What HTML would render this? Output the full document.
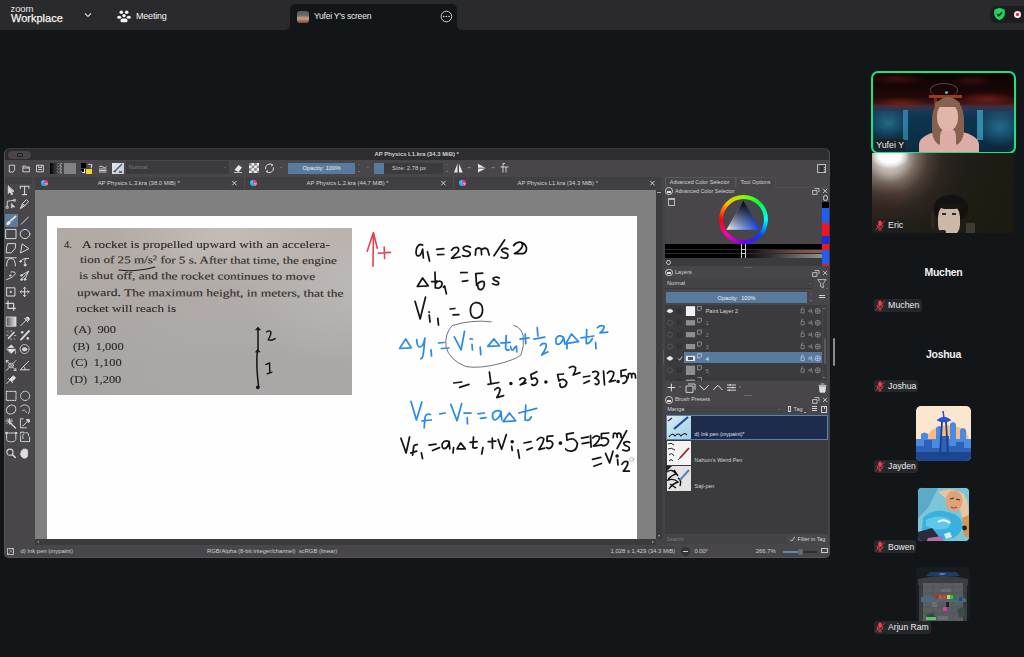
<!DOCTYPE html>
<html><head><meta charset="utf-8">
<style>
*{margin:0;padding:0;box-sizing:border-box}
html,body{width:1024px;height:657px;overflow:hidden;background:#131619;font-family:"Liberation Sans",sans-serif;position:relative}
.a{position:absolute}
#top{left:0;top:0;width:1024px;height:30px;background:#2a2a2c}
.zt{color:#f2f2f2;white-space:nowrap}
#kr{left:0;top:0;width:1024px;height:657px;clip-path:inset(148px 194px 99px 4px round 6px 6px 5px 5px);background:#48464a}
.k{position:absolute}
.kt{position:absolute;color:#d6d6d6;font-size:5.9px;white-space:nowrap;line-height:1}
.ic{position:absolute;overflow:visible}
.tile{position:absolute;left:872px;width:143px;height:81px}
.badge{position:absolute;padding-top:0.8px;height:14px;background:#25272a;border-radius:3px;color:#ececec;font-size:8.2px;line-height:14px;padding-left:15px;padding-right:4px;white-space:nowrap}
.nm{position:absolute;color:#f0f0f0;font-weight:bold;font-size:10px;white-space:nowrap;text-align:center;width:143px}
</style></head>
<body>
<div id="top" class="a">
  <div class="a zt" style="left:10.5px;top:2.5px;font-size:9.5px;letter-spacing:-0.1px;color:#e6e6e6">zoom</div>
  <div class="a zt" style="left:11px;top:12px;font-size:11px;-webkit-text-stroke:0.25px #f2f2f2">Workplace</div>
  <svg class="a" style="left:83px;top:11px" width="10" height="8" viewBox="0 0 10 8"><path d="M2 2.5 L5 5.5 L8 2.5" stroke="#d0d0d0" stroke-width="1.2" fill="none"/></svg>
  <svg class="a" style="left:117px;top:10px" width="14" height="13" viewBox="0 0 14 13" fill="#f4f4f4">
    <circle cx="4.3" cy="2.2" r="1.8"/><circle cx="9.7" cy="2.2" r="1.8"/><circle cx="7" cy="5.6" r="1.7"/>
    <ellipse cx="2.2" cy="7.3" rx="2.1" ry="1.5"/><ellipse cx="11.8" cy="7.3" rx="2.1" ry="1.5"/>
    <path d="M3.6 10.2 Q3.6 8.4 5.4 8.4 L8.6 8.4 Q10.4 8.4 10.4 10.2 L10.4 11.2 Q10.4 12.2 9.4 12.2 L4.6 12.2 Q3.6 12.2 3.6 11.2Z"/>
  </svg>
  <div class="a zt" style="left:136px;top:10.5px;font-size:9px;letter-spacing:-0.2px">Meeting</div>
  <div class="a" style="left:290px;top:4px;width:167px;height:26px;background:#131619;border-radius:5px 5px 0 0"></div>
  <div class="a" style="left:285px;top:25px;width:5px;height:5px;background:radial-gradient(circle at 0 0,#2a2a2c 4.6px,#131619 5.2px)"></div>
  <div class="a" style="left:457px;top:25px;width:5px;height:5px;background:radial-gradient(circle at 100% 0,#2a2a2c 4.6px,#131619 5.2px)"></div>
  <div class="a" style="left:297px;top:11px;width:12px;height:12px;border-radius:3px;background:linear-gradient(180deg,#5a5a5e 0%,#6b6668 35%,#c8a088 60%,#8a4a30 100%)"></div>
  <div class="a zt" style="left:314px;top:11px;font-size:8.6px;letter-spacing:-0.25px;color:#e8e8e8">Yufei Y's screen</div>
  <svg class="a" style="left:440px;top:10px" width="13" height="13" viewBox="0 0 13 13"><circle cx="6.4" cy="6.5" r="5.3" stroke="#cfcfcf" stroke-width="1" fill="none"/><circle cx="3.7" cy="6.5" r="0.8" fill="#e0e0e0"/><circle cx="6.4" cy="6.5" r="0.8" fill="#e0e0e0"/><circle cx="9.1" cy="6.5" r="0.8" fill="#e0e0e0"/></svg>
  <div class="a" style="left:990px;top:5.5px;width:40px;height:17px;border-radius:6px;background:#1d1d1f"></div>
  <svg class="a" style="left:993px;top:7px" width="13" height="14" viewBox="0 0 13 14"><path d="M6.5 0.8 L11.8 2.8 L11.8 7 Q11.5 11 6.5 13.2 Q1.5 11 1.2 7 L1.2 2.8Z" fill="#23d160"/><path d="M4 7 L5.8 8.8 L9.2 5.2" stroke="#1a1a1a" stroke-width="1.3" fill="none"/></svg>
  <div class="a" style="left:1013.5px;top:10.5px;width:7.5px;height:7.5px;border-radius:50%;background:#f0f0f0"></div>
  <div class="a" style="left:1016px;top:13px;width:2.6px;height:2.6px;border-radius:50%;background:#e02030"></div>
</div>


<div id="kr" class="a">
  <!-- title bar -->
  <div class="k" style="left:4px;top:148px;width:826px;height:12px;background:#2d2c2f"></div>
  <div class="k" style="left:8px;top:151px;width:23px;height:8px;background:#48464a;border-radius:4px"></div>
  <div class="k" style="left:17px;top:153px;width:6px;height:4px;border:0.8px solid #222;border-radius:1px"></div>
  <div class="kt" style="left:374.5px;top:151.8px;font-size:5.9px;font-weight:bold;color:#cfcfcf">AP Physics L1.kra (34.3 MiB) *</div>
  <!-- toolbar icons -->
  <svg class="ic" style="left:0;top:160px" width="830" height="16" viewBox="0 160 830 16">
    <g fill="none" stroke="#d8d8d8" stroke-width="0.9">
      <path d="M9.3 165.2 H14.6 V170.5 L13 172 H9.3 Z"/>
      <path d="M22.9 166 H25.5 L26.3 167 H29.4 V171.8 H22.9 Z M22.9 168 H29.4"/>
      <path d="M36.5 165.2 H43.4 V171.8 H36.5 Z M38.5 165.2 V167.5 H41.5 V165.2 M38 169.5 H42"/>
      <path d="M99 167 Q101 165 103 167 Q105 169 106.5 166.5 M99 169 H106.5 M99 170.5 H106.5 M99 172 H106.5"/>
    </g>
  </svg>
  <div class="k" style="left:50px;top:163px;width:11.5px;height:10.8px;background:linear-gradient(90deg,#000 0%,#222 30%,rgba(0,0,0,0) 100%),repeating-conic-gradient(#9a9a9a 0 25%,#5a5a5a 0 50%) 0 0/3px 3px"></div>
  <div class="k" style="left:64px;top:163px;width:11.7px;height:10.8px;background:#838383"></div>
  <div class="k" style="left:81px;top:163px;width:5px;height:5px;background:#000"></div>
  <div class="k" style="left:86.4px;top:168.7px;width:6px;height:5.3px;background:#f2d928"></div>
  <div class="k" style="left:81px;top:169px;width:4px;height:4px;background:#000;border-radius:0 0 0 3px;border-right:1.5px solid #fff;border-bottom:1.5px solid #fff"></div>
  <div class="k" style="left:87.5px;top:163.5px;width:4px;height:4px;border-top:1px solid #ddd;border-right:1px solid #ddd;transform:rotate(10deg)"></div>
  <div class="k" style="left:112.3px;top:162.5px;width:11.7px;height:11.2px;background:linear-gradient(135deg,#e8e8e8,#c8c8c8)"></div>
  <svg class="ic" style="left:112px;top:162px" width="12" height="12" viewBox="0 0 12 12"><path d="M2 10 L10 2" stroke="#3a6ea8" stroke-width="1.6"/><path d="M1.5 9.5 L4 9.5" stroke="#444" stroke-width="1"/><path d="M7 10 L10 10" stroke="#2a4a78" stroke-width="1.5"/></svg>
  <div class="k" style="left:126px;top:161.2px;width:102.5px;height:12.9px;background:#3b3a3d;border-radius:1px"></div>
  <div class="kt" style="left:128.5px;top:165.4px;color:#7c7b7e">Normal</div>
  <div class="k" style="left:223.5px;top:167px;border-left:1.6px solid transparent;border-right:1.6px solid transparent;border-top:1.6px solid #777"></div>
  <svg class="ic" style="left:232px;top:161px" width="80" height="14" viewBox="232 161 80 14">
    <path d="M234.5 170 L238.5 165 L242 167.5 L238.5 172 Z" fill="#e8e8e8"/><path d="M234 172.5 H242" stroke="#ddd" stroke-width="0.8"/>
    <path d="M272.6 165 A4.3 4.3 0 0 0 265.6 169.2 M266.4 171.6 A4.3 4.3 0 0 0 273.4 167.4" fill="none" stroke="#d8d8d8" stroke-width="1"/>
    <path d="M271.4 163.6 L273.4 165.2 L271.2 166.4 Z M267.6 172.8 L265.6 171.2 L267.8 170 Z" fill="#d8d8d8"/>
  </svg>
  <div class="k" style="left:249px;top:163px;width:10.4px;height:10.4px;background:repeating-conic-gradient(#eeeeee 0 25%,#8a8a8a 0 50%) 0 0/5.2px 5.2px;filter:blur(0.25px)"></div>
  <div class="k" style="left:279.5px;top:167px;border-left:1.6px solid transparent;border-right:1.6px solid transparent;border-top:1.6px solid #8a8a8a"></div>
  <div class="k" style="left:287.5px;top:162.5px;width:67.7px;height:11.4px;background:#587b9d"></div>
  <div class="kt" style="left:302.5px;top:166px;color:#eef2f6">Opacity: 100%</div>
  <div class="k" style="left:357.5px;top:164px;border-left:1.4px solid transparent;border-right:1.4px solid transparent;border-bottom:1.4px solid #777"></div>
  <div class="k" style="left:357.5px;top:170.5px;border-left:1.4px solid transparent;border-right:1.4px solid transparent;border-top:1.4px solid #999"></div>
  <div class="k" style="left:366.5px;top:167px;border-left:1.6px solid transparent;border-right:1.6px solid transparent;border-top:1.6px solid #8a8a8a"></div>
  <div class="k" style="left:373.7px;top:162.5px;width:69px;height:11.4px;background:#3b3a3d"></div>
  <div class="k" style="left:373.7px;top:162.5px;width:10.3px;height:11.4px;background:#587b9d"></div>
  <div class="kt" style="left:392px;top:166px;color:#d0d0d0">Size: 2.78 px</div>
  <div class="k" style="left:445.5px;top:164px;border-left:1.4px solid transparent;border-right:1.4px solid transparent;border-bottom:1.4px solid #777"></div>
  <div class="k" style="left:445.5px;top:170.5px;border-left:1.4px solid transparent;border-right:1.4px solid transparent;border-top:1.4px solid #999"></div>
  <svg class="ic" style="left:450px;top:161px" width="70" height="14" viewBox="450 161 70 14">
    <path d="M457.5 163.5 L454 172.5 H457.5 Z M459 163.5 L462.7 172.5 H459 Z" fill="#e6e6e6"/>
    <path d="M467.5 167 H470.7 L469.1 168.7 Z" fill="#8a8a8a"/>
    <path d="M478 163.8 L486 168.2 L478 172.4 Z" fill="#e6e6e6"/><path d="M478 168.2 H486" stroke="#48464a" stroke-width="0.8"/>
    <path d="M491.5 167 H494.7 L493.1 168.7 Z" fill="#8a8a8a"/>
    <path d="M500.5 167 H508.5 M503 163.5 V172.5 M506 167 V172.5 M503 163.5 H505" stroke="#dcdcdc" stroke-width="0.9" fill="none"/>
  </svg>
  <div class="k" style="left:817px;top:164px;width:9px;height:8.8px;border:0.8px solid #b8b8b8;border-top-width:1.3px"></div>
  <div class="k" style="left:820px;top:166px;width:3px;height:5.6px;background:#2e2d30"></div>
  <div class="k" style="left:824px;top:166.5px;width:0.8px;height:5px;background:repeating-linear-gradient(180deg,#aaa 0 1px,transparent 1px 2px)"></div>
  <!-- tab row -->
  <div class="k" style="left:5px;top:176.5px;width:27px;height:7px;background:#3f3e42"></div>
  <div class="k" style="left:35px;top:176.7px;width:625.5px;height:13.3px;background:#403f43"></div>
  <div class="k" style="left:244px;top:177px;width:0.8px;height:13px;background:#4e4d51"></div>
  <div class="k" style="left:453px;top:177px;width:0.8px;height:13px;background:#4e4d51"></div>
  <div class="kt" style="left:97.7px;top:180.8px;color:#d4d4d4">AP Physics L.3.kra (38.0 MiB) *</div>
  <div class="kt" style="left:306.5px;top:180.8px;color:#d4d4d4">AP Physics L.2.kra (44.7 MiB) *</div>
  <div class="kt" style="left:517.5px;top:180.8px;color:#d4d4d4">AP Physics L1.kra (34.3 MiB) *</div>
  <svg class="ic" style="left:35px;top:177px" width="627" height="13" viewBox="35 177 627 13">
    <g stroke="#e0e0e0" stroke-width="0.9"><path d="M232.3 181 L236.5 185.3 M236.5 181 L232.3 185.3"/><path d="M441.3 181 L445.5 185.3 M445.5 181 L441.3 185.3"/><path d="M650.3 181 L654.5 185.3 M654.5 181 L650.3 185.3"/></g>
  </svg>
  <div class="k" style="left:41px;top:179.5px;width:6.5px;height:6.5px;border-radius:50%;background:conic-gradient(#f02cd8 0 25%,#f6a030 0 40%,#30a8f0 0 75%,#30d0d0 0 100%)"></div>
  <div class="k" style="left:250px;top:179.5px;width:6.5px;height:6.5px;border-radius:50%;background:conic-gradient(#f02cd8 0 25%,#f6a030 0 40%,#30a8f0 0 75%,#30d0d0 0 100%)"></div>
  <div class="k" style="left:459px;top:179.5px;width:6.5px;height:6.5px;border-radius:50%;background:conic-gradient(#f02cd8 0 25%,#f6a030 0 40%,#30a8f0 0 75%,#30d0d0 0 100%)"></div>
  <!-- canvas -->
  <div class="k" style="left:35px;top:190px;width:621px;height:349px;background:#808080"></div>
  <div class="k" style="left:47px;top:216px;width:590px;height:323px;background:#fefefe"></div>
  <div class="k" style="left:656px;top:190px;width:6px;height:349px;background:#3b3a3d"></div>
  <div class="k" style="left:657px;top:192px;width:3.6px;height:0.9px;background:#aaa"></div>
  <div class="k" style="left:35px;top:539px;width:621px;height:6px;background:#3b3a3d"></div>
  <div class="k" style="left:656px;top:539px;width:6px;height:6px;background:#444346"></div>
  <div class="k" style="left:37px;top:540.5px;border-top:1.5px solid transparent;border-bottom:1.5px solid transparent;border-right:2px solid #aaa"></div>
  <div class="k" style="left:652px;top:540.5px;border-top:1.5px solid transparent;border-bottom:1.5px solid transparent;border-left:2px solid #aaa"></div>
  <div class="k" style="left:657.5px;top:535px;border-left:1.5px solid transparent;border-right:1.5px solid transparent;border-top:2px solid #aaa"></div>
  <!-- status bar -->
  <div class="k" style="left:7px;top:547.5px;width:7px;height:7px;border:0.8px solid #b8b8b8"></div>
  <svg class="ic" style="left:7px;top:547px" width="8" height="8" viewBox="0 0 8 8"><path d="M1 1 L7 7 M7 1 L1 7" stroke="#999" stroke-width="0.7"/></svg>
  <div class="kt" style="left:20.5px;top:548.5px;color:#cfcfcf">d) Ink pen (mypaint)</div>
  <div class="kt" style="left:207px;top:548.5px;color:#cfcfcf">RGB/Alpha (8-bit integer/channel)&nbsp; scRGB (linear)</div>
  <div class="k" style="left:609px;top:546px;width:68px;height:11px;background:#444346"></div>
  <div class="kt" style="left:610.6px;top:548.5px;color:#cfcfcf">1,028 x 1,429 (34.3 MiB)</div>
  <div class="k" style="left:681px;top:547px;width:9px;height:9px;border-radius:50%;background:#333235"></div>
  <div class="k" style="left:683px;top:551px;width:5px;height:0.9px;background:#ccc"></div>
  <div class="kt" style="left:694.4px;top:548.5px;color:#cfcfcf">0.00°</div>
  <div class="kt" style="left:755.8px;top:548.5px;color:#cfcfcf">266.7%</div>
  <div class="k" style="left:782.5px;top:551px;width:34px;height:1.5px;background:#2e2d30"></div>
  <div class="k" style="left:782.5px;top:551px;width:16px;height:1.5px;background:#5a8ab8"></div>
  <div class="k" style="left:797.5px;top:548.5px;width:5px;height:6px;border-radius:2px;background:#6a696c"></div>
  <div class="k" style="left:820.5px;top:548px;width:7px;height:5px;border:0.8px solid #ccc"></div>
  <!-- toolbox -->
  <div class="k" style="left:4.2px;top:214.3px;width:13.7px;height:12.3px;background:#5d7b9a"></div>
  <svg class="ic" style="left:0;top:180px" width="35" height="285" viewBox="0 180 35 285">
   <g fill="none" stroke="#d6d6d6" stroke-width="1" stroke-linecap="round" stroke-linejoin="round">
    <path d="M8.3 186.2 L8.3 193.6 L10.1 191.7 L11.6 194.7 L12.7 194.1 L11.4 191.3 L13.6 191.3 Z" fill="#d6d6d6"/>
    <path d="M20.3 188.3 V186.3 H28.9 V188.3 M24.6 186.3 V194.6 M22.6 194.6 H26.6" stroke-width="1.1"/>
    <path d="M7.3 207.2 V201.2 L14.6 200.3" stroke-width="0.9"/>
    <rect x="6.3" y="206.3" width="2" height="2" stroke-width="0.7"/><rect x="13.8" y="199.4" width="1.8" height="1.8" stroke-width="0.7"/>
    <path d="M11.3 203.6 L11.3 208.2 L12.4 207 L14.6 207 Z" fill="#d6d6d6" stroke-width="0.6"/>
    <path d="M20.6 208.2 L22.5 203.6 L26.4 199.6 L28.6 201.8 L24.6 205.8 Z M22.5 203.6 L24.6 205.8 M23.6 204.7 L21 207.6"/>
    <path d="M7.2 224.2 L9.5 222 M10.8 220.7 L15.6 216.4" stroke="#e4e4e4" stroke-width="1.8"/>
    <ellipse cx="8.6" cy="223" rx="2.1" ry="1.6" fill="#e4e4e4" stroke="none" transform="rotate(-40 8.6 223)"/>
    <path d="M21.2 224.3 L28.4 217"/>
    <rect x="6.1" y="229.4" width="9.9" height="9.2"/>
    <ellipse cx="25" cy="234" rx="4.8" ry="4.6"/>
    <path d="M8 243.6 L15.7 243.6 L15.2 248.4 L11.3 252.8 L6.2 252.8 L6.6 247.6 Z"/>
    <path d="M20.6 252.6 L22.1 243.8 L28.6 248.4 Z"/>
    <path d="M5.6 257.8 H16.2 M6.6 266 Q6.6 258.5 11 258.5 Q15.4 258.5 15.4 266" stroke-width="1"/>
    <path d="M20.4 261.6 Q22.5 257.6 28.6 258.4 M25.4 258.6 Q24.3 261 25 264"/><circle cx="25.1" cy="265" r="1" fill="#d6d6d6"/><circle cx="20.6" cy="261.4" r="0.8" fill="#d6d6d6"/>
    <path d="M6.6 279.6 Q14 277 15.4 273.5 Q15.2 271.2 11 272"/><circle cx="10.2" cy="275.5" r="0.7" fill="#d6d6d6"/>
    <path d="M21.2 279.8 L28.6 271.2 M21 275.4 L28.6 271.2 L25 279.4" stroke-width="0.9"/><circle cx="21.4" cy="275.5" r="0.8" fill="#d6d6d6"/><circle cx="21.6" cy="279.6" r="0.9" fill="#d6d6d6"/><circle cx="25" cy="279.4" r="0.9" fill="#d6d6d6"/>
    <path d="M6.6 287.8 H14.9 V296 H6.6 Z" stroke-dasharray="1.4 0.6"/><circle cx="10.7" cy="291.9" r="0.6" fill="#d6d6d6"/>
    <path d="M20.2 291.8 H29 M24.6 287.2 V296.6 M21.4 290.6 L20.2 291.8 L21.4 293 M27.8 290.6 L29 291.8 L27.8 293 M23.4 288.4 L24.6 287.2 L25.8 288.4 M23.4 295.4 L24.6 296.6 L25.8 295.4"/>
    <path d="M8 301.2 V308.4 H15.4 M6 303.4 H13.6 V310.2" stroke-width="1.2"/>
    <path d="M4 284.2 H33" stroke="#535255" stroke-width="0.6"/>
    <path d="M4 314 H33" stroke="#535255" stroke-width="0.6"/>
    <path d="M4 357.4 H33" stroke="#535255" stroke-width="0.6"/>
    <path d="M4 387.2 H33" stroke="#535255" stroke-width="0.6"/>
    <path d="M4 445 H33" stroke="#535255" stroke-width="0.6"/>
   </g>
   <defs><linearGradient id="tg" x1="0" x2="1"><stop offset="0" stop-color="#555"/><stop offset="1" stop-color="#e8e8e8"/></linearGradient></defs>
   <rect x="6.2" y="317" width="9.8" height="9.2" fill="url(#tg)" stroke="#cfcfcf" stroke-width="0.9"/>
   <g fill="none" stroke="#d6d6d6" stroke-width="1" stroke-linecap="round" stroke-linejoin="round">
    <path d="M20.8 325.6 L26.3 320.1 M24.3 318.4 L28 322.1 M26 317.8 Q27.6 316.4 29 317.8 Q30 319.3 28.6 320.6 Z" fill="#d6d6d6"/>
    <path d="M21.2 325.4 L22.3 324.3" stroke="#6aa0d0"/>
    <path d="M8.5 338.3 L14 332.4" stroke-width="1.6"/><path d="M6.6 335.2 H8 M11.2 330.4 V331.6 M14.6 335.6 H15.8 M11 338.8 V340 M7.6 331.4 L8.4 332.2 M14.2 338.6 L15 339.4" stroke-width="0.8"/>
    <path d="M21 339.6 L29 331" stroke-width="1.9"/><circle cx="22.2" cy="332.2" r="1.3" fill="#d6d6d6" stroke="none"/><circle cx="27.8" cy="338.4" r="1.3" fill="#d6d6d6" stroke="none"/>
    <path d="M7 348.6 L11.4 345 L15.4 349.4 L11.2 353.2 Z" fill="#e0e0e0"/><path d="M7.6 348.4 H14.8" stroke="#48464a"/><path d="M15.2 350 Q16.2 352 15.6 353.6" stroke-width="0.8"/>
    <circle cx="24.6" cy="349" r="4.5" stroke-dasharray="1.2 1"/><ellipse cx="24.6" cy="349.3" rx="2.3" ry="1.6" fill="#d6d6d6"/>
    <path d="M6.4 360.6 L15.8 370.4 M15.8 360.6 L6.4 370.4 M6.4 360.6 H8.4 M6.4 360.6 V362.6 M15.8 370.4 H13.8 M15.8 370.4 V368.4" stroke-width="0.9"/><circle cx="11.1" cy="365.5" r="2.4" stroke-width="0.8"/>
    <path d="M20.4 369.8 H29.4 M20.4 369.8 L28.6 361.2 M23.6 366.4 Q25.2 367.6 25.2 369.8"/>
    <path d="M6.6 383.6 L9.8 380.4 M8.4 378.4 L12.6 382.6 M9.6 379.4 L13.4 375.8 L15.6 378 L11.8 381.6" fill="#e0e0e0"/>
    <path d="M6.4 391.4 H16 V400.4 H6.4 Z" stroke-dasharray="1.6 1"/>
    <circle cx="25.1" cy="395.9" r="4.6" stroke-dasharray="1.6 1"/>
    <ellipse cx="11.1" cy="409.6" rx="5" ry="4.2" transform="rotate(-35 11.1 409.6)" stroke-dasharray="1.6 1"/>
    <path d="M20.6 406.6 Q24 403.6 28 406 Q30.8 409.4 28.4 413.6 M22.6 410.6 Q24.6 409 26.4 412.4" stroke-dasharray="1.5 0.9"/>
    <path d="M9.4 422.2 L15.6 428" stroke-width="1.3"/><path d="M6 421 L12.6 421 M9.4 418.4 V424.2 M7.2 418.8 L11.8 423.4 M11.8 418.8 L7.2 423.4" stroke-width="0.9"/>
    <path d="M20.4 421.4 V427.8 H26.6 M23 418.8 H20.4 V421" stroke-dasharray="1.4 0.8"/><path d="M22.6 426.2 L27.4 421.4 M26.2 420 L29 419.2 L29.6 421.8 L28.6 422.6" fill="#d6d6d6"/>
    <path d="M6.4 433 H16 M6.6 434 V439 Q6.6 441.8 11.2 441.8 Q15.8 441.8 15.8 439 V434" stroke-dasharray="1.5 0.9"/><circle cx="6.4" cy="433" r="0.8" fill="#d6d6d6"/><circle cx="16" cy="433" r="0.8" fill="#d6d6d6"/>
    <path d="M20.6 436 V441.6 H29.6 V437 M23.6 432.2 H20.6 V434 M23 438.6 Q22 433 26 432.6 Q29.6 432.8 28.2 436" stroke-dasharray="1.4 0.8"/>
    <circle cx="10" cy="452.2" r="3.1" stroke-width="1.1"/><path d="M12.3 454.5 L15.2 457.4" stroke-width="1.5"/>
    <path d="M21 453.6 V451.6 Q21 450.6 21.9 450.6 Q22.7 450.6 22.7 451.6 V449.6 Q22.7 449 23.5 449 Q24.3 449 24.3 449.6 V449.4 Q24.3 448.8 25.2 448.8 Q26 448.8 26 449.6 V450.2 Q26 449.6 26.8 449.6 Q27.7 449.6 27.7 450.4 V455.2 Q27.6 458.2 24.6 458.2 Q22.2 458.2 21.4 456.4 L20.2 453.8" fill="#dedede" stroke-width="0.7"/>
   </g>
  </svg>
  <!-- separators -->
  <div class="k" style="left:4px;top:148px;width:826px;height:410px;border:0.7px solid #545256;border-radius:6px 6px 5px 5px;border-top-color:#3a393c"></div>
</div>

<div class="a" style="left:0;top:0;width:1024px;height:657px;clip-path:inset(148px 194px 99px 4px round 6px 6px 5px 5px)">
  <!-- dock left strip -->
  <div class="k" style="left:661.5px;top:190px;width:3px;height:355px;background:#434245"></div>
  <div class="k" style="left:662.5px;top:350px;width:1px;height:14px;background:#5a595c"></div>
  <!-- docker tabs -->
  <div class="k" style="left:665px;top:176.8px;width:70.5px;height:10.4px;background:#48464a;border:0.6px solid #58575a;border-bottom:none"></div>
  <div class="k" style="left:735.6px;top:177px;width:40.7px;height:9.8px;background:#47454a;border:0.6px solid #524f55;border-bottom:none"></div>
  <div class="kt" style="left:669.8px;top:180.1px;font-size:5.4px;color:#d2d2d2">Advanced Color Selector</div>
  <div class="kt" style="left:740.6px;top:180.1px;font-size:5.4px;color:#d2d2d2">Tool Options</div>
  <div class="k" style="left:776px;top:186.8px;width:54px;height:0.5px;background:#504e53"></div>
  <!-- color selector header -->
  <div class="k" style="left:665.2px;top:187.3px;width:7.6px;height:7.6px;border-radius:50%;border:0.8px solid #cfcfcf"></div>
  <div class="k" style="left:667.4px;top:191px;width:3.4px;height:2px;background:#dcdcdc"></div>
  <div class="kt" style="left:675px;top:188.7px;font-size:5.4px;color:#d2d2d2">Advanced Color Selector</div>
  <div class="k" style="left:668.3px;top:198.3px;width:6.8px;height:7.6px;border:0.8px solid #b8b8b8"></div>
  <div class="k" style="left:668.3px;top:198.3px;width:6.8px;height:1.6px;background:#b8b8b8"></div>
  <!-- float/close icons -->
  <svg class="ic" style="left:800px;top:185px" width="30" height="220" viewBox="800 185 30 220">
   <g fill="none" stroke="#d8d8d8" stroke-width="0.8">
    <path d="M814.6 188.6 H819 V192.2 M812.6 190.6 H817 V194.4 H812.6 Z"/><path d="M823 188.8 L827.2 193 M827.2 188.8 L823 193"/>
    <path d="M814.6 270.6 H819 V274.2 M812.6 272.6 H817 V276.4 H812.6 Z"/><path d="M823 270.8 L827.2 275 M827.2 270.8 L823 275"/>
    <path d="M814.6 397.6 H819 V401.2 M812.6 399.6 H817 V403.4 H812.6 Z"/><path d="M823 397.8 L827.2 402 M827.2 397.8 L823 402"/>
   </g>
  </svg>
  <!-- color wheel -->
  <div class="k" style="left:719.1px;top:195.3px;width:48.8px;height:48.8px;border-radius:50%;background:conic-gradient(from 0deg,hsl(90,100%,50%),hsl(135,100%,50%) 45deg,hsl(180,100%,50%) 90deg,hsl(225,100%,50%) 135deg,hsl(270,100%,45%) 180deg,hsl(315,100%,50%) 225deg,hsl(360,100%,50%) 270deg,hsl(405,100%,50%) 315deg,hsl(450,100%,50%) 360deg)"></div>
  <div class="k" style="left:723.1px;top:199.3px;width:40.8px;height:40.8px;border-radius:50%;background:#48464a"></div>
  <svg class="ic" style="left:720px;top:196px" width="48" height="48" viewBox="720 196 48 48">
   <defs>
    <linearGradient id="cw1" x1="743.3" y1="200.5" x2="743.5" y2="229.7" gradientUnits="userSpaceOnUse"><stop offset="0" stop-color="#000"/><stop offset="1" stop-color="#000" stop-opacity="0"/></linearGradient>
    <linearGradient id="cw2" x1="726.4" y1="229.7" x2="760.7" y2="229.7" gradientUnits="userSpaceOnUse"><stop offset="0" stop-color="#f4f4f4"/><stop offset="0.5" stop-color="#7a9ae8"/><stop offset="1" stop-color="#0a3cf6"/></linearGradient>
   </defs>
   <path d="M743.3 200.5 L760.7 229.7 L726.4 229.7 Z" fill="url(#cw2)"/>
   <path d="M743.3 200.5 L760.7 229.7 L726.4 229.7 Z" fill="url(#cw1)"/>
  </svg>
  <!-- gradient bars -->
  <div class="k" style="left:664.8px;top:243.8px;width:157.5px;height:14.3px;background:#000"></div>
  <div class="k" style="left:664.8px;top:249.4px;width:157.5px;height:3.4px;background:linear-gradient(90deg,#000 0%,#000 50%,#3a2a28 65%,#7a4e46 85%,#8a5e55 100%)"></div>
  <div class="k" style="left:664.8px;top:253.6px;width:157.5px;height:4.4px;background:linear-gradient(90deg,#000 0%,#000 45%,#2a2a2a 65%,#777 90%,#8f8f8f 100%)"></div>
  <div class="k" style="left:664.8px;top:249px;width:157.5px;height:0.5px;background:#2a2a2a"></div>
  <div class="k" style="left:664.8px;top:253.2px;width:157.5px;height:0.5px;background:#2a2a2a"></div>
  <div class="k" style="left:741px;top:243.8px;width:4.6px;height:14.3px;border-left:0.8px solid #ccc;border-right:0.8px solid #ccc"></div>
  <div class="k" style="left:741px;top:248.8px;width:4.6px;height:0.8px;background:#ccc"></div>
  <div class="k" style="left:741px;top:253.4px;width:4.6px;height:0.8px;background:#ccc"></div>
  <div class="k" style="left:664.8px;top:258px;width:157.5px;height:7.5px;background:#3b3a3d"></div>
  <div class="k" style="left:666px;top:259.6px;width:5px;height:5px;border-radius:50%;border:0.8px solid #d0d0d0"></div>
  <!-- recent colors column -->
  <div class="k" style="left:822.6px;top:195.2px;width:5.6px;height:5.6px;border-radius:50%;border:0.8px solid #d0d0d0"></div>
  <div class="k" style="left:822px;top:201.7px;width:6.6px;height:64.7px;background:linear-gradient(180deg,#000 0,#000 6.1px,#1f5ef5 6.1px,#1f5ef5 20.6px,#f2141e 20.6px,#f2141e 34.3px,#1a2ae6 34.3px,#1a2ae6 41.9px,#f2141e 41.9px,#f2141e 48px,#1f5ef5 48px,#1f5ef5 61.7px,#f2141e 61.7px)"></div>
  <div class="k" style="left:743.5px;top:267px;width:8px;height:0.8px;background:#5f5e61"></div>
  <!-- layers docker -->
  <div class="k" style="left:665.2px;top:268.6px;width:7.6px;height:7.6px;border-radius:50%;border:0.8px solid #cfcfcf"></div>
  <div class="k" style="left:667.4px;top:272.4px;width:3.4px;height:2px;background:#dcdcdc"></div>
  <div class="kt" style="left:675px;top:270px;font-size:5.6px;color:#d2d2d2">Layers</div>
  <div class="k" style="left:665.3px;top:278.2px;width:148px;height:10.8px;background:#434245;border-bottom:0.6px solid #38373a"></div>
  <div class="kt" style="left:667px;top:281px;font-size:5.6px;color:#d4d4d4">Normal</div>
  <div class="k" style="left:808.6px;top:283px;border-left:1.6px solid transparent;border-right:1.6px solid transparent;border-top:1.6px solid #8a8a8a"></div>
  <svg class="ic" style="left:815px;top:278px" width="15" height="12" viewBox="815 278 15 12"><path d="M817.8 279.6 H826 L823.2 283.4 V287.8 L820.6 286.4 V283.4 Z" fill="none" stroke="#d4d4d4" stroke-width="0.8"/><path d="M826.6 288.4 L827.6 288.4" stroke="#aaa" stroke-width="0.8"/></svg>
  <div class="k" style="left:666px;top:291.9px;width:141px;height:11.4px;background:#587b9d"></div>
  <div class="kt" style="left:717.6px;top:295.8px;font-size:5.6px;color:#eef2f6">Opacity:&nbsp; 100%</div>
  <div class="k" style="left:809.6px;top:293.5px;border-left:1.3px solid transparent;border-right:1.3px solid transparent;border-bottom:1.3px solid #777"></div>
  <div class="k" style="left:809.6px;top:299.5px;border-left:1.3px solid transparent;border-right:1.3px solid transparent;border-top:1.3px solid #999"></div>
  <div class="k" style="left:818.6px;top:294.6px;width:6.6px;height:5.6px;background:linear-gradient(180deg,#d4d4d4 0,#d4d4d4 0.9px,transparent 0.9px,transparent 2.3px,#d4d4d4 2.3px,#d4d4d4 3.2px,transparent 3.2px,transparent 4.6px,#d4d4d4 4.6px,#d4d4d4 5.5px,transparent 5.5px)"></div>
  <div class="k" style="left:665.3px;top:305.2px;width:157px;height:75.5px;background:#3b3a3d"></div>
  <div class="k" style="left:822.5px;top:305.2px;width:4.5px;height:75.5px;background:#3f3e41"></div>
  <div class="k" style="left:823.6px;top:338px;width:2.4px;height:26px;background:#5b5a5d;border-radius:1px"></div>
  <div class="k" style="left:823.2px;top:307.5px;border-left:1.4px solid transparent;border-right:1.4px solid transparent;border-bottom:1.6px solid #aaa"></div>
  <div class="k" style="left:823.2px;top:376.5px;border-left:1.4px solid transparent;border-right:1.4px solid transparent;border-top:1.6px solid #aaa"></div>
  <div class="k" style="left:684.4px;top:351.8px;width:138px;height:11px;background:#587b9d"></div>
  <svg class="ic" style="left:665px;top:305px;overflow:hidden" width="158" height="75.7" viewBox="665 305 158 75.7">
   <g fill="none" stroke="#b8b8b8" stroke-width="0.7">
    <path d="M666.8 311 Q669.9 307.4 673 311 Q669.9 314.6 666.8 311 Z" fill="#e8e8e8" stroke="#e8e8e8"/>
    <circle cx="669.9" cy="322.8" r="2.6" stroke="#5e5d60"/>
    <circle cx="669.9" cy="334.7" r="2.6" stroke="#5e5d60"/>
    <circle cx="669.9" cy="346.6" r="2.6" stroke="#5e5d60"/>
    <path d="M666.8 358.4 Q669.9 354.8 673 358.4 Q669.9 362 666.8 358.4 Z" fill="#e8e8e8" stroke="#e8e8e8"/>
    <circle cx="669.9" cy="370.3" r="2.6" stroke="#5e5d60"/>
    <path d="M678.2 358.6 L679.6 360.2 L682.2 356.6" stroke="#e8e8e8" stroke-width="0.8"/>
   </g>
   <g fill="#333236">
    <rect x="676.7" y="308.4" width="5.3" height="5.3"/><rect x="676.7" y="320.2" width="5.3" height="5.3"/><rect x="676.7" y="332.1" width="5.3" height="5.3"/><rect x="676.7" y="344" width="5.3" height="5.3"/><rect x="676.7" y="367.7" width="5.3" height="5.3"/><rect x="676.7" y="379.5" width="5.3" height="5.3"/>
   </g>
   <rect x="685.9" y="306.2" width="9.2" height="9.8" fill="#f2f2f2"/>
   <rect x="685.9" y="320.2" width="9.2" height="5.2" fill="#8e8e8e"/>
   <rect x="685.9" y="332.1" width="9.2" height="5.2" fill="#8e8e8e"/>
   <rect x="685.9" y="344" width="9.2" height="5.2" fill="#8e8e8e"/>
   <rect x="685.9" y="355.8" width="9.2" height="5.2" fill="#e8e8e8"/><rect x="688" y="357" width="5" height="3" fill="#555"/>
   <rect x="685.9" y="365.6" width="9.2" height="9.4" fill="#8e8e8e"/>
   <rect x="685.9" y="379.6" width="9.2" height="2" fill="#8e8e8e"/>
   <g fill="none" stroke="#bdbdbd" stroke-width="0.6">
    <path d="M697.6 306.4 H701.4 V309.6 L700 310.6 H697.6 Z"/><path d="M697.6 318.2 H701.4 V321.4 L700 322.4 H697.6 Z"/><path d="M697.6 330.1 H701.4 V333.3 L700 334.3 H697.6 Z"/><path d="M697.6 342 H701.4 V345.2 L700 346.2 H697.6 Z"/><path d="M697.6 353.8 H701.4 V357 L700 358 H697.6 Z" stroke="#e0e8f0"/><path d="M697.6 365.7 H701.4 V368.9 L700 369.9 H697.6 Z"/><path d="M697.6 377.5 H701.4 V380.7"/>
   </g>
   <g fill="none" stroke="#9a9a9a" stroke-width="0.65">
    <path d="M801 313 H804.2 V309.6 H801 Z M801.6 309.6 V308 Q802.6 306.8 803.6 308"/><path d="M808.4 311 Q810 308.6 811.6 311 Q810 313.4 808.4 311 M811.2 308.6 L812.4 313.6"/><circle cx="817.8" cy="311" r="2.6"/><path d="M815.2 311 H820.4 M817.8 308.4 V313.6"/>
    <path d="M801 324.8 H804.2 V321.4 H801 Z M801.6 321.4 V319.8 Q802.6 318.6 803.6 319.8"/><path d="M808.4 322.8 Q810 320.4 811.6 322.8 Q810 325.2 808.4 322.8 M811.2 320.4 L812.4 325.4"/><circle cx="817.8" cy="322.8" r="2.6"/><path d="M815.2 322.8 H820.4 M817.8 320.2 V325.4"/>
    <path d="M801 336.7 H804.2 V333.3 H801 Z M801.6 333.3 V331.7 Q802.6 330.5 803.6 331.7"/><path d="M808.4 334.7 Q810 332.3 811.6 334.7 Q810 337.1 808.4 334.7 M811.2 332.3 L812.4 337.3"/><circle cx="817.8" cy="334.7" r="2.6"/><path d="M815.2 334.7 H820.4 M817.8 332.1 V337.3"/>
    <path d="M801 348.6 H804.2 V345.2 H801 Z M801.6 345.2 V343.6 Q802.6 342.4 803.6 343.6"/><path d="M808.4 346.6 Q810 344.2 811.6 346.6 Q810 349 808.4 346.6 M811.2 344.2 L812.4 349.2"/><circle cx="817.8" cy="346.6" r="2.6"/><path d="M815.2 346.6 H820.4 M817.8 344 V349.2"/>
    <path d="M801 360.4 H804.2 V357 H801 Z M801.6 357 V355.4 Q802.6 354.2 803.6 355.4" stroke="#c8d4e0"/><path d="M808.4 358.4 Q810 356 811.6 358.4 Q810 360.8 808.4 358.4 M811.2 356 L812.4 361" stroke="#c8d4e0"/><circle cx="817.8" cy="358.4" r="2.6" stroke="#c8d4e0"/><path d="M815.2 358.4 H820.4 M817.8 355.8 V361" stroke="#c8d4e0"/>
    <path d="M801 372.3 H804.2 V368.9 H801 Z M801.6 368.9 V367.3 Q802.6 366.1 803.6 367.3"/><path d="M808.4 370.3 Q810 367.9 811.6 370.3 Q810 372.7 808.4 370.3 M811.2 367.9 L812.4 372.9"/><circle cx="817.8" cy="370.3" r="2.6"/><path d="M815.2 370.3 H820.4 M817.8 367.7 V372.9"/>
   </g>
  </svg>
  <div class="kt" style="left:705.7px;top:309.2px;font-size:5.5px;color:#dedede">Paint Layer 2</div>
  <div class="kt" style="left:705.7px;top:321.0px;font-size:5.5px;color:#8a8a8a">1</div>
  <div class="kt" style="left:705.7px;top:332.9px;font-size:5.5px;color:#8a8a8a">2</div>
  <div class="kt" style="left:705.7px;top:344.8px;font-size:5.5px;color:#8a8a8a">3</div>
  <div class="kt" style="left:705.7px;top:356.6px;font-size:5.5px;color:#e8eef4">4</div>
  <div class="kt" style="left:705.7px;top:368.5px;font-size:5.5px;color:#8a8a8a">5</div>
  <!-- layer toolbar -->
  <svg class="ic" style="left:665px;top:381px" width="165" height="16" viewBox="665 381 165 16">
   <g fill="none" stroke="#dedede" stroke-width="1">
    <path d="M667.6 387.5 H675.2 M671.4 383.7 V391.3"/>
    <path d="M679 386.6 H681 L680 387.8 Z" fill="#aaa" stroke="none"/>
    <path d="M688 384 H695 V390 M686 386 H693 V392.4 H686 Z" stroke-width="0.9"/>
    <path d="M699.6 385.2 L704.2 390 L708.7 385.2"/>
    <path d="M713.3 390 L717.8 385.2 L722.4 390"/>
    <path d="M727 385 H736 M727 387.6 H736 M727 390.2 H736" stroke-width="0.9"/><path d="M730 384 V386 M733 386.6 V388.6 M729.4 389.2 V391.2" stroke-width="0.9"/>
    <path d="M739 386.6 H741 L740 387.8 Z" fill="#aaa" stroke="none"/>
    <path d="M818.6 385.4 H826.4 M820.6 384 H824.4 M819.4 386.2 L820 392.2 H825 L825.6 386.2" fill="#dedede" stroke-width="0.8"/>
   </g>
  </svg>
  <div class="k" style="left:743.7px;top:394.8px;width:8.3px;height:0.7px;background:#6a696c"></div>
  <!-- brush presets -->
  <div class="k" style="left:665.2px;top:396px;width:7.6px;height:7.6px;border-radius:50%;border:0.8px solid #cfcfcf"></div>
  <div class="k" style="left:667.4px;top:399.8px;width:3.4px;height:2px;background:#dcdcdc"></div>
  <div class="kt" style="left:675px;top:397px;font-size:5.6px;color:#d2d2d2">Brush Presets</div>
  <div class="k" style="left:665.7px;top:405.8px;width:117px;height:7.4px;background:#434245"></div>
  <div class="kt" style="left:667.2px;top:406.7px;font-size:5.6px;color:#d4d4d4">Manga</div>
  <div class="k" style="left:777.6px;top:408.6px;border-left:1.5px solid transparent;border-right:1.5px solid transparent;border-top:1.5px solid #8a8a8a"></div>
  <div class="k" style="left:786px;top:405.8px;width:21.4px;height:7.4px;background:#434245"></div>
  <div class="k" style="left:788.2px;top:406.4px;width:3px;height:6px;border:0.7px solid #d0d0d0"></div>
  <div class="kt" style="left:793.6px;top:406.7px;font-size:5.6px;color:#d4d4d4">Tag</div>
  <div class="k" style="left:804.4px;top:411.6px;width:1.4px;height:0.7px;background:#aaa"></div>
  <div class="k" style="left:812.4px;top:406.4px;width:5px;height:5px;background:linear-gradient(180deg,#d4d4d4 0,#d4d4d4 0.8px,transparent 0.8px,transparent 2px,#d4d4d4 2px,#d4d4d4 2.8px,transparent 2.8px,transparent 4px,#d4d4d4 4px,#d4d4d4 4.8px,transparent 4.8px)"></div>
  <div class="k" style="left:821px;top:405.6px;width:6px;height:7px;border:0.7px solid #d0d0d0"></div>
  <div class="k" style="left:823.6px;top:405.6px;width:0.8px;height:3px;background:#d0d0d0"></div>
  <div class="k" style="left:665.3px;top:414.6px;width:163px;height:119px;background:#3b3a3d"></div>
  <div class="k" style="left:665.8px;top:415.3px;width:162px;height:24.3px;background:#1e2b4d;border:0.8px solid #5a82ac"></div>
  <div class="k" style="left:666.5px;top:415.8px;width:24px;height:23.5px;background:linear-gradient(135deg,#d8ecf4,#9fd0e6)"></div>
  <svg class="ic" style="left:666px;top:415px" width="25" height="25" viewBox="0 0 25 25"><path d="M8 14 L22 2" stroke="#1e4a9a" stroke-width="2.2"/><path d="M3 22 Q6 17 9 21 Q12 17 15 21 Q18 17 21 20" stroke="#1a2a44" stroke-width="1.2" fill="none"/><path d="M2 6 L6 3" stroke="#334" stroke-width="1.4"/></svg>
  <div class="kt" style="left:694.6px;top:432.3px;font-size:5.4px;color:#dde4ee">d) Ink pen (mypaint)*</div>
  <div class="k" style="left:666.5px;top:440.6px;width:24px;height:24.6px;background:#f4f4f4"></div>
  <svg class="ic" style="left:666px;top:440px" width="25" height="25" viewBox="0 0 25 25"><path d="M2 4 Q5 2 8 5 M2 9 Q5 7 9 10 M3 15 Q6 12 8 16 M3 21 Q5 18 7 21" stroke="#222" stroke-width="1" fill="none"/><path d="M14 18 L23 8" stroke="#a02020" stroke-width="1.8"/><path d="M12 20 L15 17" stroke="#444" stroke-width="1"/></svg>
  <div class="kt" style="left:694.6px;top:458.2px;font-size:5.4px;color:#d4d4d4">Nahum's Weird Pen</div>
  <div class="k" style="left:666.5px;top:466px;width:24px;height:24.6px;background:#e4e4e4"></div>
  <svg class="ic" style="left:666px;top:466px" width="25" height="25" viewBox="0 0 25 25"><path d="M1 6 Q6 2 10 8 Q4 10 2 14 Q8 12 12 16 Q6 18 3 23 M8 4 L12 10 M4 18 L10 22 M12 12 Q16 14 14 20" stroke="#111" stroke-width="1.4" fill="none"/><path d="M14 14 L23 4" stroke="#4a86c8" stroke-width="2"/><path d="M0 0 H6 L0 6 Z" fill="#222"/></svg>
  <div class="kt" style="left:694.6px;top:483.8px;font-size:5.4px;color:#d4d4d4">Saji-pen</div>
  <div class="k" style="left:665.3px;top:534.6px;width:122px;height:9.4px;background:#434245"></div>
  <div class="kt" style="left:666.4px;top:536.6px;font-size:5.4px;color:#7a797c">Search</div>
  <div class="k" style="left:788px;top:534.6px;width:40px;height:9.4px;background:#48474a"></div>
  <svg class="ic" style="left:789px;top:535px" width="8" height="8" viewBox="0 0 8 8"><path d="M1.2 4.4 L2.8 6 L5.8 2" stroke="#dedede" stroke-width="0.8" fill="none"/></svg>
  <div class="kt" style="left:797.6px;top:536.6px;font-size:5.4px;color:#d4d4d4">Filter in Tag</div>
  <div class="k" style="left:828.6px;top:176px;width:1.4px;height:369px;background:#414043"></div>
</div>

<div class="a" style="left:57px;top:228px;width:295px;height:167px;overflow:hidden;background:radial-gradient(ellipse 110px 50px at 170px 8px,rgba(205,200,196,0.6),rgba(205,200,196,0) 100%),radial-gradient(ellipse 120px 90px at 295px 50px,rgba(196,194,192,0.55),rgba(196,194,192,0) 100%),linear-gradient(180deg,#b5ada8 0%,#b2aca8 30%,#aeaaa7 55%,#aaa8a6 80%,#a9a8a6 100%)">
 <div style="position:absolute;left:0;top:0;width:100%;height:100%;background:linear-gradient(90deg,rgba(160,150,145,0.18),rgba(150,140,135,0) 45%)"></div>
</div>
<div class="a" style="left:0;top:0;width:1024px;height:657px;clip-path:inset(228px 672px 262px 57px);font-family:'Liberation Serif',serif;color:#2e2a29;-webkit-text-stroke:0.12px #2e2a29;font-size:10.5px;line-height:10.5px;white-space:nowrap">
 <div class="a" style="left:64px;top:240px">4.</div>
 <div class="a" style="left:81.5px;top:240px;transform-origin:0 0;transform:scaleX(1.263)">A rocket is propelled upward with an accelera-</div>
 <div class="a" style="left:80px;top:255.4px;transform-origin:0 0;transform:scaleX(1.242) rotate(0.3deg)">tion of 25 m/s<sup style="font-size:7px;line-height:0;vertical-align:3px">2</sup> for 5 s. After that time, the engine</div>
 <div class="a" style="left:78.6px;top:271.2px;transform-origin:0 0;transform:scaleX(1.269) rotate(0.3deg)">is shut off, and the rocket continues to move</div>
 <div class="a" style="left:77.2px;top:287.6px;transform-origin:0 0;transform:scaleX(1.285) rotate(0.2deg)">upward. The maximum height, in meters, that the</div>
 <div class="a" style="left:75.7px;top:303.5px;transform-origin:0 0;transform:scaleX(1.247)">rocket will reach is</div>
 <div class="a" style="left:74.3px;top:324.6px;transform-origin:0 0;transform:scaleX(1.18)">(A)&nbsp; 900</div>
 <div class="a" style="left:72.8px;top:341.8px;transform-origin:0 0;transform:scaleX(1.18)">(B)&nbsp; 1,000</div>
 <div class="a" style="left:71.4px;top:357.7px;transform-origin:0 0;transform:scaleX(1.18)">(C)&nbsp; 1,100</div>
 <div class="a" style="left:70px;top:375px;transform-origin:0 0;transform:scaleX(1.18)">(D)&nbsp; 1,200</div>
</div>
<svg class="a" style="left:0;top:0" width="1024" height="657" viewBox="0 0 1024 657">
 <g fill="none" stroke-linecap="round" stroke-linejoin="round">
  <!-- photo ink -->
  <path d="M119 270 Q135 272.5 155 267" stroke="#1e1c1c" stroke-width="1.1"/>
  <path d="M258 329 L258 350.6 M257.2 352 Q256 366 258.6 386.6" stroke="#141212" stroke-width="1.5"/>
  <path d="M255.8 329.6 L258 327.2 L260.2 329.6 Z M255.8 351.8 L257.6 349.4 L259.8 351.6 Z" fill="#141212" stroke="#141212" stroke-width="0.8"/>
  <circle cx="257.8" cy="387.4" r="1.8" fill="#141212"/>
  <path d="M266.6 331.8 Q269.8 329.6 271 332.4 Q270.8 335.8 268.2 339.8 Q271.8 341 275.2 338.6" stroke="#141212" stroke-width="1.4"/>
  <path d="M265.8 364.6 L269.6 363 L269.8 373 M267.2 373.8 L272 372.2" stroke="#141212" stroke-width="1.4"/>
  <!-- red arrow -->
  <g stroke="#e3434f" stroke-width="1.6">
   <path d="M373.4 232.5 L373 266.2 M367.2 251.2 L373.4 232.5 L377.3 248.2"/>
   <path d="M378.2 253.2 L390.4 252.4 M384.2 247 L384.6 258.4"/>
  </g>
  <!-- black lines 1-3 -->
  <g stroke="#151515" stroke-width="1.75">
   <path d="M422.6 245 C418.5 243 415.6 248 416.1 253 C416.6 258 421.2 256.5 422.6 249.2 L423.4 258"/>
   <path d="M427.4 251.8 L429.6 261"/>
   <path d="M436.6 249.3 L443.7 248.7 M437.5 254.6 L443.7 254.5"/>
   <path d="M451.5 250.2 Q453.8 246.8 457.6 247.6 Q460.2 250 456.8 253.2 Q453.6 256 451.6 258.4 L460 257"/>
   <path d="M470.4 247.2 Q466.2 245 463.2 247.6 Q462.8 250.2 467 251.2 Q471.2 252.4 469.8 255.2 Q467 257.2 462.6 255.6"/>
   <path d="M475.4 255.2 L475.8 249.4 Q478.6 246.6 481.2 249.2 L481.6 254.8 M481.4 250 Q484.6 246.8 487.6 249.4 L489.2 255"/>
   <path d="M494 255.8 L504.6 240"/>
   <path d="M507.8 249 Q504.4 247.2 501.6 249.8 Q502 252 505.6 252.8 Q509.2 254.4 507.2 257.6 Q504.4 259 501.2 257.2"/>
   <path d="M513.6 245.6 Q516.8 241.4 521.4 242.4 Q524 245.4 520.6 249.2 Q517.6 252.6 514.4 253.6 L523.2 253.6 Q527 252.4 526.4 247.6 Q525.2 243.6 521.8 242.6"/>
   <path d="M417.3 286.5 L422.6 278 L428.2 285.8 Z"/>
   <path d="M435 272.2 L435.4 288 M431.6 281.6 L437.6 281.2 M435.4 283.6 Q439.4 279.4 442 282.6 Q442.4 286.6 439.2 288 Q437 288.6 435.6 287.4"/>
   <path d="M443.4 287.2 L444.6 286 L446.4 293.8"/>
   <path d="M460.7 272.6 L467.1 272.5 M462.4 281.4 L467.7 280.6"/>
   <path d="M482.6 273.2 L475.8 273.6 L476.6 285.4 Q479.6 280.6 483.8 281.6 Q485.6 286.8 481.4 289.6 Q477.8 290.4 477.8 285.2"/>
   <path d="M499.2 278 Q496 276 493 278.4 Q493.4 280.6 496.6 281.2 Q499.6 282.4 498.2 284.4 Q495.8 285.4 492.6 283.8"/>
   <path d="M415 301.3 L420.2 318.9 L425.5 297.2"/>
   <path d="M429 311.9 L429.3 312.3 M429.2 315.2 L430 322"/>
   <path d="M437.8 318.3 L438.5 325"/>
   <path d="M450.1 309 L454.8 308.5 M453 314.8 L458.9 314.6"/>
   <path d="M476 302.5 Q470 303.5 470.4 311.5 Q471.2 318.6 476.6 318.2 Q482.8 317 482.6 309.6 Q482.2 302.6 476.8 302.6"/>
  </g>
  <!-- gray ellipse -->
  <path d="M491.2 321.8 Q472 319.4 452 325.6 Q444.6 334 446 346.4 Q449 360 466 366.6 Q480 368.8 500 363.6 Q515 359.6 521 355 Q524.4 346 523.2 336 Q521.6 327.6 513.7 325.3" stroke="#5a5a5a" stroke-width="0.85"/>
  <!-- blue line -->
  <g stroke="#2b8be6" stroke-width="1.75">
   <path d="M399.6 348.5 L405.7 338.9 L411.2 347.8 Z"/>
   <path d="M416.7 339.6 Q417 347.2 420 347 Q423.4 346.6 424.9 338.2 Q424 350 423 355.4 Q422 358.8 420.8 358.8"/>
   <path d="M431 349.9 L431.5 356"/>
   <path d="M438.5 343 L444 342.5 M441.3 348.5 L448.8 348"/>
   <path d="M454.3 336.9 L461.1 349.9 L464.5 331.4"/>
   <path d="M470 338.9 L472.5 339 M472 344.4 L472.5 349.9"/>
   <path d="M480.2 347.1 L480.8 354.6"/>
   <path d="M487.8 346.4 L493.9 338.9 L499.4 345.8 Z"/>
   <path d="M500.7 343 L510.3 342.3 M506.2 335.5 L505.6 348.4 Q506 350.6 509 349.8"/>
   <path d="M510.6 346.6 Q511.2 351.4 513.4 349.6 Q515.4 346.2 516.4 346.2 L516.8 351.8"/>
   <path d="M520.1 339.1 L529 337.9 M525.2 334 L525.8 343.6"/>
   <path d="M537.2 327.7 L537.9 336 M534 339.1 L544.8 337.2"/>
   <path d="M540.4 345.5 Q543 342.4 546 344 Q547.4 347.2 541.7 355 L548 351.8"/>
   <path d="M563 337 Q558.6 334 556 338.6 Q555.2 344.6 558.4 344.4 Q561.8 343.6 563.6 337.6 L565 344.2"/>
   <path d="M565.8 343.6 L571.5 334 L578.5 341.7 Z M567 343.6 L567 348.6"/>
   <path d="M581 337.9 L593.7 336 M586.7 329.6 L586.2 343.4 Q589.4 344.2 592.4 338.5"/>
   <path d="M595.6 342.3 L596 348.6"/>
   <path d="M597.5 327.7 Q600.6 324.2 604.2 326.4 Q604.2 329.4 600 332.8 L607.7 332.1"/>
  </g>
  <!-- black line 4 -->
  <g stroke="#151515" stroke-width="1.75">
   <path d="M453.8 383 L461.6 382 M459.6 387.3 L468.9 384.4"/>
   <path d="M489.4 372.2 L490.9 383 M488 384.4 L498.7 382.5"/>
   <path d="M494.8 389.8 Q498.6 385.4 500.2 389.6 Q499.6 393.4 496.8 397.6 L503.6 395.6"/>
   <circle cx="510.9" cy="383.4" r="0.9" fill="#151515"/>
   <path d="M519.7 379.5 Q523 376.4 525.6 379.6 Q524.6 382.4 520.2 384.9 L526 383"/>
   <path d="M536.8 371.7 L530.9 374.6 L531.6 379.2 Q536.4 376.2 537.6 381.2 Q537 385.4 532.8 385.4 L531.9 384.4"/>
   <circle cx="545.9" cy="381.9" r="0.9" fill="#151515"/>
   <path d="M563.4 374 L557.6 374.5 L559 381 Q563.4 377.2 566.8 382.2 Q566.4 386.8 562.4 387.4 Q559.6 387.6 560 383.6"/>
   <path d="M569.3 367.7 Q573 365 575.6 367.6 Q576 371 573.2 375 L580 372.6"/>
   <path d="M583.5 377 L589.8 376 M584 383.3 L589.3 380.9"/>
   <path d="M592.7 372.1 Q596.6 370.2 598.6 373.2 Q598 377 594.8 378.2 Q599.6 379.4 598.8 383 Q597 385.6 595.2 383.8"/>
   <path d="M603.5 371.1 L604.5 384.8"/>
   <path d="M607.4 373.1 Q610.8 369.6 613.8 372.6 Q614 376.4 609.3 381.9 L615.2 380.4"/>
   <circle cx="618.1" cy="381.4" r="0.9" fill="#151515"/>
   <path d="M626 369.6 L621 370.6 L621.2 376.6 Q626 374 627.2 378.4 Q626.6 383 623 383.4"/>
   <path d="M628 378 L628.4 374.2 Q630.2 372.4 631.6 374.6 L631.8 377.6 M631.8 374.4 Q633.8 372.2 635.2 374.4 L635.6 378"/>
  </g>
  <!-- blue line 5 -->
  <g stroke="#2b8be6" stroke-width="1.75">
   <path d="M410.9 401.3 L416.4 420 L421.9 402"/>
   <path d="M430.5 414.5 Q425.6 413 425 417.6 L424.2 427.8 M421.9 420.8 L431.3 420"/>
   <path d="M439.8 413.8 L445.3 413"/>
   <path d="M450.8 404.4 L457 420.8 L461.7 403.6"/>
   <path d="M464 413 L471 413 M467.2 417.7 L467.5 423.9"/>
   <path d="M478 413.8 L484.4 413 M480.5 418.4 L486 417.7"/>
   <path d="M501 411.6 Q495.6 409 492.6 413.8 Q492 420 495.2 419.8 Q499 419 501 412.2 L501.8 419.8"/>
   <path d="M503.1 421.6 L509.4 413 L515.6 420.8 Z"/>
   <path d="M518.8 413 L536.7 408.3 M525.8 405.2 L525 420 Q529.4 421.6 531.3 416.9"/>
  </g>
  <!-- black line 6 -->
  <g stroke="#151515" stroke-width="1.75">
   <path d="M400.9 438.2 L406.1 452.9 L409.6 437"/>
   <path d="M417.3 444.6 Q413.6 444.4 413.6 447.4 L412.6 455.2 M410.8 452.9 L416.7 451.1"/>
   <path d="M421.4 452.9 L422.5 458.7"/>
   <path d="M429 445.2 L436 444.1 M432.5 450.5 L439.5 447.6"/>
   <path d="M449.2 441.6 Q444.6 439.6 442.2 443.6 Q441.6 448.8 444.6 448.6 Q448 447.8 449.2 442 L449.8 448.8"/>
   <path d="M453.6 447.6 L453 452.9"/>
   <path d="M457.1 448.75 L460.6 442.9 L465.3 448.75 Z"/>
   <path d="M473.5 437 L472.9 447.6 Q474.8 448.8 477 447.6 M470 442.3 L477 441.7"/>
   <path d="M482.9 447.6 L481.7 454"/>
   <path d="M488.2 441.7 L495.8 441.1 M492.3 438.2 L492.5 448.2"/>
   <path d="M498.1 439.4 L501.6 449.3 L506.3 434.7"/>
   <circle cx="512.2" cy="441.7" r="0.9" fill="#151515"/>
   <path d="M511.7 446.4 L512.2 450.5"/>
   <path d="M518 449.9 L519.4 458.1"/>
   <path d="M524.1 443 L531 441.7 M526.9 449.9 L532.3 447.8"/>
   <path d="M537.1 440 Q540.6 435.6 543.8 438.8 Q543.6 442.6 538.8 449.6 L544.6 448.2"/>
   <path d="M552.9 435.8 L547.2 436.4 L547 441.4 Q551.4 439.4 552.8 443.6 Q552.4 448.2 548.2 448.6 L546.6 447.6"/>
   <circle cx="560.4" cy="443" r="1" fill="#151515"/>
   <path d="M573.4 432.8 L566.5 434.1 L567 440.3 Q574.2 436.2 577.4 443.4 Q577 450.6 571.6 451.2 Q567.6 451.4 565.6 449"/>
   <path d="M581.6 438.2 L588.4 436.9 M582.2 443.7 L589.1 442.3"/>
   <path d="M590.5 435.5 L591.1 447.1"/>
   <path d="M592.8 437.8 Q596.4 434.4 599.6 437.2 Q599.6 440.6 593.4 446.2 L600.6 445.2"/>
   <path d="M608.6 433 L601.4 433.6 L601.4 438.6 Q606.6 436.6 608.6 440.6 Q608 445.6 602.8 445.8 L601.4 444.8"/>
   <path d="M613.2 437.6 L613.6 433.6 Q615.6 432.4 617 434.4 L617.2 437.2 M617 434 Q619 432.4 620.8 434.4 L621.2 437.6"/>
   <path d="M617.1 448.5 L626.7 430.7"/>
   <path d="M629.8 442.4 Q626.8 440.6 623.8 442.8 Q623.8 445.2 626.8 446 Q630.4 447.4 629 450 Q626.6 451.6 622.8 450"/>
   <path d="M592.5 459.4 L600.7 457.4 M593.9 466.3 L601.4 463.5"/>
   <path d="M605.5 453.3 L609.6 462.9 L613 451.2"/>
   <circle cx="617.1" cy="456" r="0.9" fill="#151515"/>
   <path d="M617.5 459.4 L618 464.9"/>
   <path d="M621.9 464.2 Q625 459.8 627.8 462.2 Q628.4 465.6 623.3 471.1 L629.4 471.1"/>
  </g>
  <circle cx="631.6" cy="459.4" r="2" stroke="#9a9a9a" stroke-width="0.7"/>
 </g>
</svg>

<!-- Yufei tile -->
<div class="a" style="left:872px;top:73px;width:142px;height:79px;overflow:hidden;border-radius:6px;background:linear-gradient(180deg,#0c0404 0%,#160606 18%,#240808 30%,#3a1414 38%,#4a2a3a 42%,#1e3a58 47%,#0d3550 56%,#0b2f47 80%,#09283c 100%)">
  <div class="a" style="left:0;top:0;width:142px;height:42px;background:radial-gradient(ellipse 30px 6px at 25px 6px,rgba(110,20,20,0.55),transparent),radial-gradient(ellipse 30px 7px at 115px 26px,rgba(150,40,40,0.6),transparent),radial-gradient(ellipse 25px 6px at 30px 30px,rgba(140,40,30,0.55),transparent),radial-gradient(ellipse 22px 6px at 100px 8px,rgba(90,20,20,0.5),transparent)"></div>
  <div class="a" style="left:0;top:38px;width:142px;height:41px;background:radial-gradient(ellipse 22px 16px at 16px 12px,rgba(60,160,190,0.5),transparent),radial-gradient(ellipse 26px 20px at 128px 16px,rgba(60,160,200,0.5),transparent),radial-gradient(ellipse 40px 12px at 20px 36px,rgba(20,60,80,0.5),transparent)"></div>
  <div class="a" style="left:31px;top:37px;width:5px;height:30px;background:rgba(70,190,230,0.5)"></div>
  <div class="a" style="left:105px;top:37px;width:6px;height:30px;background:rgba(80,200,235,0.55)"></div>
  <div class="a" style="left:58px;top:10px;width:28px;height:14px;border-radius:50%;border:1.2px solid rgba(140,150,170,0.45);border-bottom:none"></div>
  <div class="a" style="left:73px;top:18px;width:3px;height:3px;border-radius:50%;background:#5ab0d8"></div>
  <div class="a" style="left:57px;top:22px;width:33px;height:3px;background:#9a3a20"></div>
  <div class="a" style="left:62px;top:25px;width:2.5px;height:12px;background:#7a2a1a"></div>
  <div class="a" style="left:47px;top:58px;width:60px;height:30px;border-radius:45% 45% 0 0;background:#dcaca6"></div>
  <div class="a" style="left:60px;top:24px;width:32px;height:48px;border-radius:48% 48% 30% 30%;background:#86624e"></div>
  <div class="a" style="left:68px;top:56px;width:16px;height:24px;background:#dcaca6;border-radius:30% 30% 0 0"></div>
  <div class="a" style="left:65px;top:30px;width:21px;height:28px;border-radius:45%;background:#e0b6aa"></div>
  <div class="a" style="left:63px;top:27px;width:25px;height:7px;border-radius:50% 50% 20% 20%;background:#86624e"></div>
  </div>
<div class="a" style="left:871px;top:71px;width:145px;height:83px;border:2px solid #1ee27e;border-radius:7px"></div>
<div class="badge" style="left:874.3px;top:138.6px;height:12.5px;line-height:12.5px;padding-left:2px;width:30.4px;background:rgba(30,30,32,0.85);font-size:8.8px">Yufei Y</div>
<!-- Eric tile -->
<div class="a" style="left:872px;top:153px;width:142px;height:80px;overflow:hidden;background:radial-gradient(ellipse 19px 13px at 18px 3px,#ffffff 0,#fcfcfc 55%,rgba(255,255,255,0) 100%),radial-gradient(circle at 18px 4px,#e8e4e0 0,#b8b0a8 16px,#7a6a60 26px,#4a3c34 38px,#2e2620 52px,#201e16 75px,#1a1a10 140px)">
  <div class="a" style="left:0;top:25px;width:40px;height:45px;background:radial-gradient(ellipse 20px 25px at 14px 25px,rgba(60,30,30,0.35),transparent)"></div>
  <div class="a" style="left:62px;top:42px;width:34px;height:24px;border-radius:50% 50% 30% 30%;background:#141210"></div>
  <div class="a" style="left:66px;top:52px;width:22px;height:30px;border-radius:40% 40% 35% 35%;background:#cdb8a8"></div>
  <div class="a" style="left:68px;top:51px;width:20px;height:5px;background:#1a1614;border-radius:0 0 40% 40%"></div>
  <div class="a" style="left:70px;top:60px;width:4px;height:1.5px;background:#3a2a22"></div>
  <div class="a" style="left:80px;top:60px;width:4px;height:1.5px;background:#3a2a22"></div>
  <div class="a" style="left:59px;top:58px;width:3px;height:18px;border-radius:2px;background:#2a2826"></div>
  <div class="a" style="left:66px;top:77px;width:8px;height:4px;border-radius:2px;background:#222"></div>
  <div class="a" style="left:94px;top:70px;width:9px;height:10px;background:#3a3a36"></div>
</div>
<div class="nm" style="left:872px;top:266px;font-size:10.5px;letter-spacing:-0.3px">Muchen</div>
<div class="nm" style="left:872px;top:347.6px;font-size:10.5px;letter-spacing:-0.3px">Joshua</div>
<!-- Jayden avatar -->
<div class="a" style="left:916px;top:406px;width:55px;height:55px;border-radius:5px;overflow:hidden;background:#fde6cf">
 <svg width="55" height="55" viewBox="0 0 55 55">
  <path d="M10 30 Q25 12 50 24 L55 40 L0 40 Z" fill="#f7bd85"/>
  <path d="M0 33 H5 V28 Q8 25 12 28 V33 H20 V22 Q23 18 26 22 V33 H34 V18 Q37 14 40 18 V33 H44 V24 Q47 20 50 24 V33 H55 V55 H0 Z" fill="#4a8ae0"/>
  <path d="M0 40 H8 V34 H16 V42 H24 V30 H33 V40 H40 V36 H48 V42 H55 V55 H0 Z" fill="#2e62b8"/>
  <path d="M0 46 H55 V55 H0 Z" fill="#1e4690"/>
  <path d="M27 5 L28 12 M22 14 Q28 9 34 14 Q28 17 22 14 Z" stroke="#1e50c8" stroke-width="1.5" fill="#2a5cd8"/>
  <path d="M26 16 L24 48 M30 16 L32 48 M24 48 H33" stroke="#1e3e88" stroke-width="1.8" fill="none"/>
 </svg>
</div>
<!-- Bowen avatar -->
<div class="a" style="left:917px;top:486.7px;width:53px;height:55px;border-radius:5px;overflow:hidden;background:#6cc0d8;border:1px solid #15181b">
 <svg width="53" height="55" viewBox="0 0 53 55">
  <rect x="0" y="0" width="53" height="55" fill="#7cc6d8"/>
  <path d="M0 0 H20 L10 20 L0 30 Z" fill="#5aaac8"/>
  <path d="M20 4 Q34 -2 46 6 Q52 16 50 30 L48 45 Q44 30 42 22 Z" fill="#e6c6a0"/>
  <ellipse cx="36" cy="13" rx="8.5" ry="10.5" fill="#e0a27a"/>
  <path d="M32 11 L36 10 M38 11 L42 12" stroke="#333" stroke-width="1.2"/>
  <path d="M33 19 Q36 21 39 19" stroke="#a04050" stroke-width="1.2" fill="none"/>
  <path d="M5 30 Q14 20 30 24 Q46 28 44 40 Q40 52 24 52 Q8 52 4 42 Z" fill="#3ab0e0"/>
  <path d="M8 32 Q18 26 30 30 Q36 34 30 40 Q18 44 8 38 Z" fill="#5cc8ea"/>
  <path d="M20 34 Q26 30 32 35" stroke="#fff" stroke-width="2" fill="none"/>
  <path d="M0 44 L14 40 L22 50 L18 55 H0 Z" fill="#2a2a3c"/>
  <path d="M10 50 L24 48 L26 55 H8 Z" fill="#b070a8"/>
  <path d="M44 30 L53 26 V50 L46 48 Z" fill="#d09850"/>
  <circle cx="46.5" cy="40" r="2.4" fill="#222"/>
  <path d="M26 46 L32 44 L34 49 L28 51 Z" fill="#d8eef4"/>
 </svg>
</div>
<!-- Arjun avatar -->
<div class="a" style="left:916.3px;top:567.2px;width:54px;height:54px;border-radius:5px;overflow:hidden;background:#1a1d20">
 <svg width="54" height="54" viewBox="0 0 54 54">
  <path d="M14 5 H40 L44 9 H10 Z" fill="#1e3c68"/>
  <path d="M24 6 L30 6 L28 8 L23 8 Z" fill="#4a7ab8"/>
  <path d="M2 12 Q27 6 52 12 V18 H2 Z" fill="#3a3e42"/>
  <rect x="3" y="16" width="48" height="38" fill="#5a5d60"/>
  <rect x="3" y="16" width="4" height="38" fill="#3a3d40"/>
  <rect x="47" y="16" width="4" height="38" fill="#3a3d40"/>
  <path d="M7 20 H47 M7 26 H47 M7 40 H47 M7 46 H47 M17 16 V54 M27 16 V54 M37 16 V54" stroke="#4e5154" stroke-width="0.6"/>
  <rect x="25" y="22" width="10" height="3" fill="#6a6d70"/>
  <path d="M5 30 Q12 28 18 30 L36 30 Q44 28 50 32 L50 35 H5 Z" fill="#4a6a7a"/>
  <rect x="19" y="28" width="3" height="4" fill="#c02828"/><rect x="23" y="28" width="3" height="4" fill="#d85020"/><rect x="27" y="28" width="3" height="4" fill="#d04040"/><rect x="31" y="28" width="3" height="4" fill="#e0d040"/><rect x="34" y="28" width="3" height="4" fill="#30c040"/><rect x="38" y="29" width="3" height="4" fill="#2a7a3a"/><rect x="43" y="30" width="3" height="4" fill="#2a40a0"/>
  <rect x="16" y="35" width="5" height="5" fill="#6a7070"/>
  <rect x="30" y="35" width="3" height="5" fill="#222"/>
  <rect x="27" y="40" width="4" height="4" fill="#d040a0"/>
  <path d="M10 48 L16 46 L20 50 L14 53 Z" fill="#2e4a3a"/><rect x="10" y="50" width="10" height="3" fill="#60c070"/>
  <path d="M41 42 L48 40 L50 48 L43 51 Z" fill="#3a4e44"/>
  <rect x="22" y="49" width="10" height="4" fill="#6a6d70"/>
 </svg>
</div>
<!-- badges -->
<div class="badge" style="left:874.3px;top:218.6px;height:12.5px;line-height:12.5px;width:30.4px;padding-left:13.8px;font-size:8.8px;background:rgba(30,30,32,0.85)">Eric</div>
<div class="badge" style="left:873.8px;top:298.5px;height:13.4px;line-height:13.4px;width:48.5px;padding-left:14.3px;font-size:8.8px">Muchen</div>
<div class="badge" style="left:873.8px;top:379.7px;height:12.8px;line-height:12.8px;width:44.2px;padding-left:14.3px;font-size:8.8px">Joshua</div>
<div class="badge" style="left:873.8px;top:459.6px;height:13px;line-height:13px;width:44px;padding-left:14.3px;font-size:8.6px">Jayden</div>
<div class="badge" style="left:873.8px;top:539.8px;height:13px;line-height:13px;width:42.7px;padding-left:14.3px;font-size:8.6px">Bowen</div>
<div class="badge" style="left:873.8px;top:620.7px;height:13px;line-height:13px;width:57.2px;padding-left:14.3px;font-size:8.6px">Arjun Ram</div>
<svg class="a" style="left:0;top:0" width="1024" height="657" viewBox="0 0 1024 657">
 <defs>
  <g id="mic"><rect x="3.2" y="0" width="3.6" height="5.6" rx="1.8" fill="#e8404c"/><path d="M2 4.2 Q2 7.6 5 7.6 Q8 7.6 8 4.2 M5 7.6 V9.2 M3.4 9.4 H6.6" stroke="#e8404c" stroke-width="1" fill="none"/><path d="M0.4 9.6 L9.6 0.6" stroke="#e8404c" stroke-width="0.9"/></g>
 </defs>
 <use href="#mic" x="875" y="220.6"/>
 <use href="#mic" x="875" y="300.6"/>
 <use href="#mic" x="875" y="381.4"/>
 <use href="#mic" x="875" y="461.4"/>
 <use href="#mic" x="875" y="541.6"/>
 <use href="#mic" x="875" y="622.4"/>
</svg>
<!-- zoom splitter handle -->
<div class="a" style="left:832.6px;top:338px;width:2.2px;height:27.5px;border-radius:1px;background:#8c8c8c"></div>

</body></html>
